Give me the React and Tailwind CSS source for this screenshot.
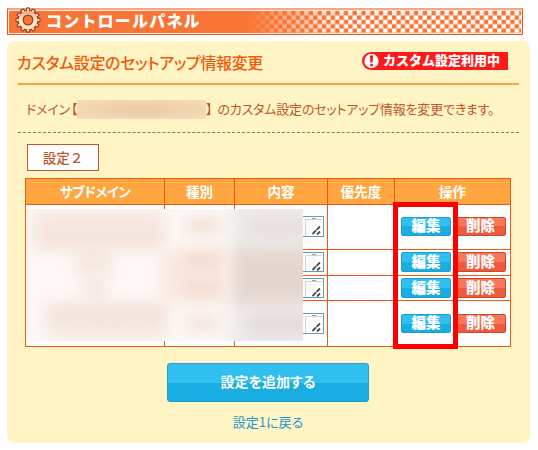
const FONT = "font-['Noto_Sans_CJK_JP',sans-serif]";

function Gear() {
  return (
    <svg viewBox="-13 -13 26 26" className="absolute left-[7px] top-[-3px] size-[26px]">
      <defs>
        <linearGradient id="gear" x1="0" y1="0" x2="0" y2="1">
          <stop offset="0" stopColor="#f3a383" />
          <stop offset="0.55" stopColor="#fff0cf" />
          <stop offset="1" stopColor="#ffdcae" />
        </linearGradient>
      </defs>
      <g fill="#fbd3ad" stroke="#94452b" strokeWidth="1.4">
        {[0, 30, 60, 90, 120, 150].map((a) => (
          <rect key={a} x="-1.5" y="-12" width="3" height="24" rx="1" transform={`rotate(${a})`} />
        ))}
        <circle r="9.6" />
      </g>
      <g fill="#fbd3ad">
        {[0, 30, 60, 90, 120, 150].map((a) => (
          <rect key={a} x="-1" y="-11.3" width="2" height="22.6" transform={`rotate(${a})`} />
        ))}
      </g>
      <circle r="9.2" fill="url(#gear)" />
      <circle r="4.9" fill="#f97536" stroke="#94452b" strokeWidth="1.3" />
    </svg>
  );
}

function Header() {
  return (
    <div className="relative ml-[7px] h-[27px] w-[516px] border border-t-2 border-[#ee5a14] border-t-[#f7a585] bg-[#f97536]">
      <div className="flex h-full justify-end border border-[#ffe9df]">
        <svg className="h-[22px] w-[274px]" viewBox="0 0 274 22" preserveAspectRatio="none">
          <defs>
            <pattern id="checks" width="8.76" height="8.76" patternUnits="userSpaceOnUse" x="4.8" y="0">
              <rect width="4.38" height="4.38" fill="#fff" />
              <rect x="4.38" y="4.38" width="4.38" height="4.38" fill="#fff" />
            </pattern>
            <linearGradient id="fade">
              <stop offset="0" stopColor="#fff" stopOpacity="0" />
              <stop offset="0.28" stopColor="#fff" stopOpacity="0.8" />
              <stop offset="0.38" stopColor="#fff" />
            </linearGradient>
            <mask id="fadeMask">
              <rect width="274" height="22" fill="url(#fade)" />
            </mask>
          </defs>
          <rect width="274" height="22" fill="url(#checks)" mask="url(#fadeMask)" />
        </svg>
      </div>
      <Gear />
      <span className="absolute left-[38px] top-[-1px] text-[16px] font-black leading-[22px] tracking-[1.2px] text-white">
        コントロールパネル
      </span>
    </div>
  );
}

function Badge() {
  return (
    <div className="flex h-[18px] w-[146px] items-center rounded-l-full bg-[#ff1a1a]">
      <svg viewBox="0 0 18 18" className="size-[18px] shrink-0">
        <circle cx="9.5" cy="9" r="7.2" fill="#fff" />
        <path d="M7.8 3.4h3.4l-.6 7.2H8.4z" fill="#ff1a1a" />
        <circle cx="9.5" cy="12.9" r="1.5" fill="#ff1a1a" />
      </svg>
      <span className="ml-[3px] whitespace-nowrap pb-[2px] text-[13px] font-black leading-[16px] text-white">
        カスタム設定利用中
      </span>
    </div>
  );
}

const BUTTON =
  "flex shrink-0 items-center justify-center rounded-[2px] border pb-[2px] from-50% to-50% bg-linear-to-b text-[14.5px] font-black leading-none text-white";

function EditButton({ height }) {
  return <span className={`${BUTTON} ${height} w-[50px] border-[#1c9fd0] from-[#31bff0] to-[#19ade2]`}>編集</span>;
}

function DeleteButton({ height }) {
  return <span className={`${BUTTON} ${height} w-[51px] border-[#c9492e] from-[#f9765b] to-[#f05a3c]`}>削除</span>;
}

function TextBox({ height }) {
  return (
    <div className={`${height} flex w-[85px] justify-end overflow-hidden border border-[#7593bd] bg-white`}>
      <svg viewBox="0 0 17 19" className="mr-px h-[19px] w-[17px]">
        <path d="M0.5 19V2.5H17" fill="#fafafa" stroke="#d2d2d2" />
        <path d="M7 1.5h4" stroke="#999" />
        <path d="M7.5 17l7.5-7.5M12 17.5l3-3" stroke="#4c4c4c" strokeWidth="1.8" strokeDasharray="5 0.7" />
      </svg>
    </div>
  );
}

const COLS = "grid grid-cols-[139px_70px_93px_67px_116px]";
const CELL = "border-r border-b border-[#ee5a14]";

function Row({ height, boxTop, boxHeight, buttonTop, buttonHeight }) {
  return (
    <div className={`${COLS} ${height} bg-white`}>
      <div className={CELL} />
      <div className={CELL} />
      <div className={`${CELL} ${boxTop} flex items-start justify-end pr-[3px]`}>
        <TextBox height={boxHeight} />
      </div>
      <div className={CELL} />
      <div className={`${CELL} ${buttonTop} flex items-start gap-[4px] pl-[6px]`}>
        <EditButton height={buttonHeight} />
        <DeleteButton height={buttonHeight} />
      </div>
    </div>
  );
}

// Obscured cell contents: x, y, width, height, colour
const SMUDGES = [
  [204, -10, 100, 156, "#eeebea"],
  [206, 40, 100, 54, "#e6d6d0"],
  [222, 8, 60, 18, "#e8deda"],
  [222, 106, 60, 18, "#e3d9d5"],
  [8, 0, 130, 40, "#f6e8e1"],
  [12, 22, 125, 14, "#f5e3da"],
  [50, 36, 35, 30, "#f6e7df"],
  [58, 68, 22, 24, "#f6e7df"],
  [20, 96, 122, 34, "#f6e9e2"],
  [24, 98, 60, 12, "#f4e1d7"],
  [80, 98, 58, 12, "#f4e1d7"],
  [134, 40, 70, 54, "#fae9e0"],
  [160, 10, 34, 14, "#f2ded3"],
  [158, 44, 36, 14, "#f1dcd0"],
  [158, 72, 36, 14, "#f1dcd0"],
  [160, 108, 34, 12, "#f2dfd5"],
];

function Smudge() {
  return (
    <div className="absolute left-0 top-[30px] h-[132px] w-[277px] overflow-hidden bg-[#fdf8f6]">
      {SMUDGES.map(([left, top, width, height, background], i) => (
        <div key={i} className="absolute rounded-[4px] blur-[7px]" style={{ left, top, width, height, background }} />
      ))}
    </div>
  );
}

export default function App() {
  return (
    <div className={`${FONT} h-[450px] w-[538px] overflow-hidden bg-white pt-[8px]`}>
      <Header />
      <main className="ml-[7px] mt-[6px] h-[402px] w-[523px] rounded-[8px] bg-[#fff4c4] pl-[11px] pt-[11px]">
        <div className="flex h-[33px] w-[501px] justify-between border-b-2 border-[#ffa04f] pr-[11px]">
          <h1 className="-ml-px -mt-px whitespace-nowrap text-[16px] font-medium leading-[22px] tracking-[-0.35px] text-[#f25a0a] [font-feature-settings:'palt']">
            カスタム設定のセットアップ情報変更
          </h1>
          <Badge />
        </div>
        <div className="flex h-[48px] w-[501px] items-center whitespace-nowrap border-b border-dashed border-[#80777a] pl-[9px] pt-px text-[13px] tracking-[-0.2px] text-[#c0562e] [font-feature-settings:'palt']">
          <span className="-ml-px">ドメイン</span>
          <span className="ml-px">【</span>
          <span className="h-[19px] w-[129px] shrink-0 bg-radial from-[#ebc8a6] to-[#f6dfb8]" />
          <span>】</span>
          <span className="ml-[5px]">のカスタム設定のセットアップ情報を変更できます。</span>
        </div>
        <div className="ml-[9px] mt-[11px] flex h-[27px] w-[72px] items-center justify-center border border-[#c0562e] bg-white pb-px text-[13.5px] font-medium text-[#c0562e]">
          設定２
        </div>
        <div className="relative ml-[7px] mt-[7px] w-[486px] border-l border-t border-[#ee5a14]">
          <div className={`${COLS} h-[26px] bg-[#ffa641] text-center text-[13.5px] font-bold leading-[24px] text-white`}>
            <div className={`${CELL} tracking-[-0.6px] [font-feature-settings:'palt']`}>サブドメイン</div>
            <div className={CELL}>種別</div>
            <div className={CELL}>内容</div>
            <div className={CELL}>優先度</div>
            <div className={CELL}>操作</div>
          </div>
          <Row height="h-[45px]" boxTop="pt-[11px]" boxHeight="h-[21px]" buttonTop="pt-[12px]" buttonHeight="h-[19px]" />
          <Row height="h-[26px]" boxTop="pt-[2px]" boxHeight="h-[20px]" buttonTop="pt-[2px]" buttonHeight="h-[20px]" />
          <Row height="h-[25px]" boxTop="pt-[2px]" boxHeight="h-[20px]" buttonTop="pt-[2px]" buttonHeight="h-[20px]" />
          <Row height="h-[46px]" boxTop="pt-[12px]" boxHeight="h-[21px]" buttonTop="pt-[13px]" buttonHeight="h-[19px]" />
          <Smudge />
          <div className="absolute left-[367px] top-[23px] h-[147px] w-[65px] border-[5px] border-[#ff0000]" />
        </div>
        <div className="ml-[149px] mt-[16px] flex h-[39px] w-[202px] items-center justify-center rounded-[3px] border border-[#1c9fd0] bg-linear-to-b from-[#31bff0] from-50% to-[#19ade2] to-50% pb-[3px] text-[14px] font-bold text-white [font-feature-settings:'palt']">
          設定を追加する
        </div>
        <a className="ml-[149px] mt-[10px] block w-[202px] text-center text-[13px] leading-[20px] text-[#2298d0] [font-feature-settings:'palt']">
          設定1に戻る
        </a>
      </main>
    </div>
  );
}
